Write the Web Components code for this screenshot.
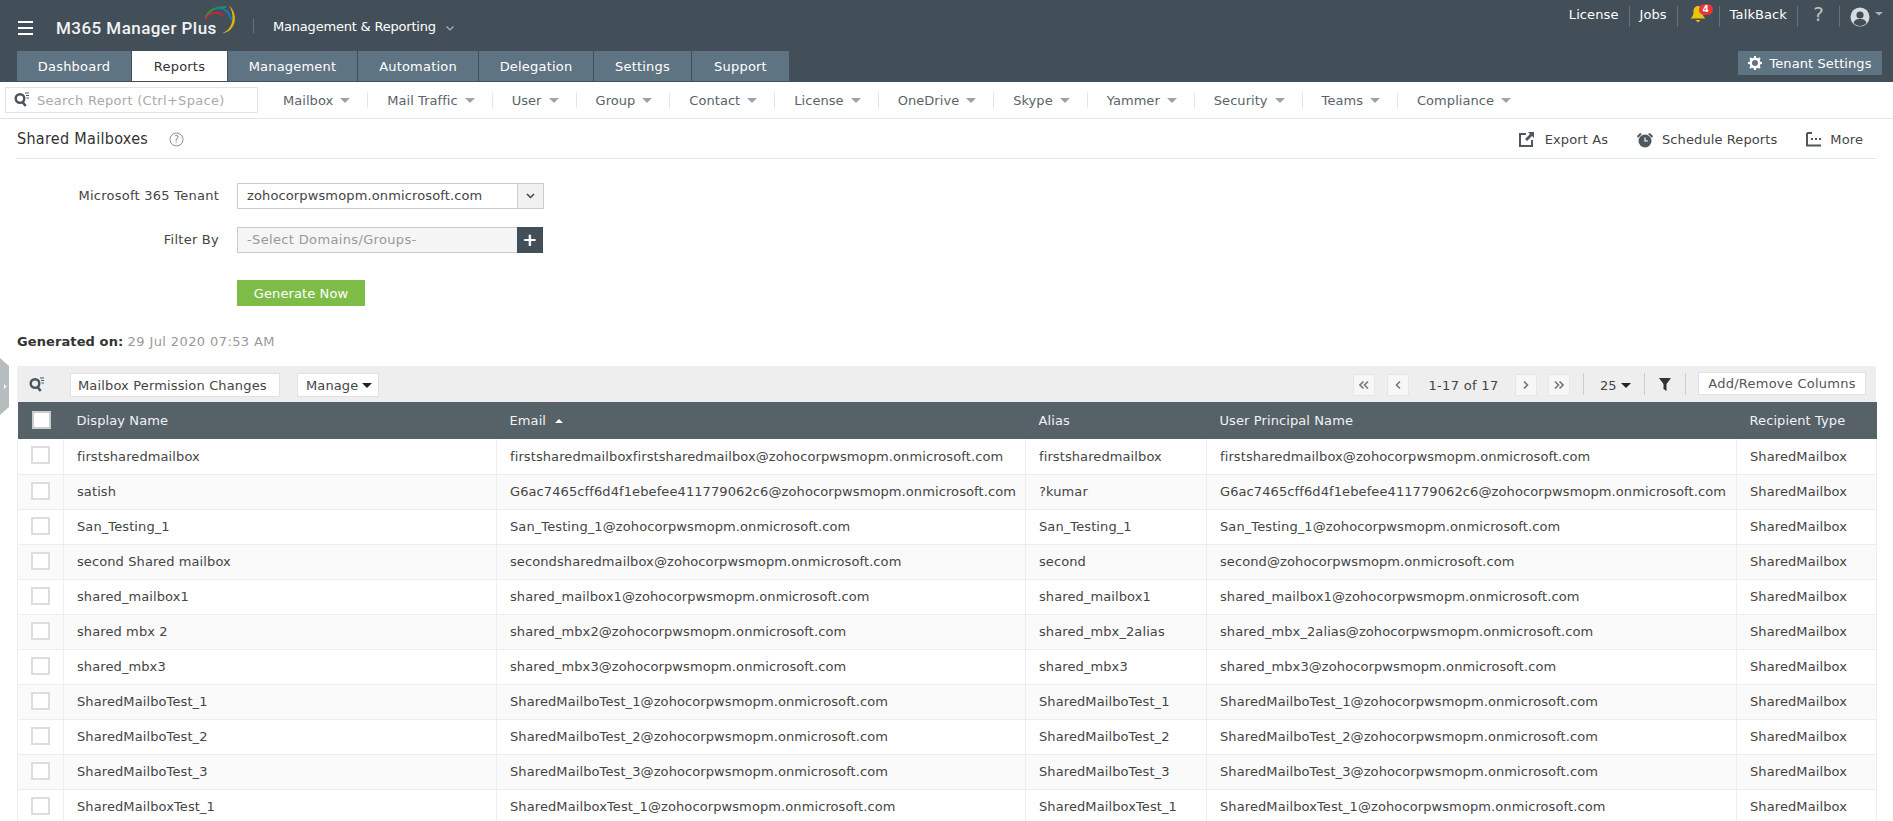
<!DOCTYPE html>
<html>
<head>
<meta charset="utf-8">
<title>Shared Mailboxes</title>
<style>
  html, body { margin: 0; height: 821px; overflow: hidden; background: #fff; }
  body { font-family: "DejaVu Sans", sans-serif; font-size: 13px; letter-spacing: .1px; color: #444; position: relative; }
</style>
</head>
<body>
<m365-header>
  <m365-tab slot="tabs" w="114">Dashboard</m365-tab>
  <m365-tab slot="tabs" w="95" active>Reports</m365-tab>
  <m365-tab slot="tabs" w="129">Management</m365-tab>
  <m365-tab slot="tabs" w="120">Automation</m365-tab>
  <m365-tab slot="tabs" w="114">Delegation</m365-tab>
  <m365-tab slot="tabs" w="97">Settings</m365-tab>
  <m365-tab slot="tabs" w="97">Support</m365-tab>
</m365-header>
<m365-nav>
  <m365-nav-item>Mailbox</m365-nav-item>
  <m365-nav-item>Mail Traffic</m365-nav-item>
  <m365-nav-item>User</m365-nav-item>
  <m365-nav-item>Group</m365-nav-item>
  <m365-nav-item>Contact</m365-nav-item>
  <m365-nav-item>License</m365-nav-item>
  <m365-nav-item>OneDrive</m365-nav-item>
  <m365-nav-item>Skype</m365-nav-item>
  <m365-nav-item>Yammer</m365-nav-item>
  <m365-nav-item>Security</m365-nav-item>
  <m365-nav-item>Teams</m365-nav-item>
  <m365-nav-item last>Compliance</m365-nav-item>
</m365-nav>
<m365-titlebar>Shared Mailboxes</m365-titlebar>
<m365-form></m365-form>
<m365-toolbar></m365-toolbar>
<m365-grid></m365-grid>
<m365-handle></m365-handle>

<script>
  const SEARCH_ICON = `<svg width="16" height="15" viewBox="0 0 16 15"><circle cx="6" cy="6.500" r="4.300" fill="none" stroke="#4a555c" stroke-width="2.400"/><path d="M8.500 10l3.200 4" stroke="#4a555c" stroke-width="2.600"/><path d="M11 1h4M12 3.500h3M12.500 6h2.500" stroke="#4a555c" stroke-width="1"/></svg>`;

  class M365Header extends HTMLElement {
    constructor() {
      super();
      this.attachShadow({mode: "open"}).innerHTML = `
      <style>
        :host { display: block; height: 82px; background: #434f58; color: #fff; position: relative; }
        .top { display: flex; height: 51px; align-items: flex-start; }
        .burger { width: 15px; height: 14px; margin: 21px 23px 0 18px; display: flex; flex-direction: column; justify-content: space-between; }
        .burger i { display: block; height: 2px; background: #fff; }
        .logo { position: relative; width: 197px; height: 51px; }
        .logo b { display: block; font: 500 17px/20px Roboto, sans-serif; letter-spacing: .45px; padding-top: 18px; color: #f2f3f3; white-space: nowrap; }
        .logo svg { position: absolute; left: 149px; top: 5px; }
        .sep { width: 1px; height: 14px; background: #66727a; margin: 19px 19px 0 0; }
        .module { font-size: 13px; line-height: 16px; letter-spacing: -.2px; margin-top: 19px; white-space: nowrap; }
        .module svg { margin-left: 10px; }
        .links { margin-left: auto; display: flex; align-items: flex-start; padding: 6px 9px 0 0; }
        .links a { box-sizing: border-box; display: flex; align-items: center; height: 21px; padding: 0 10px 5px; border-right: 1px solid #66727a; }
        .links a:last-child { border: 0; padding: 0 0 0 10px; }
        .bell { position: relative; width: 42px; padding-left: 12px !important; }
        .badge { position: absolute; left: 21px; top: -2px; width: 14px; height: 11px; border-radius: 6px; background: #e8343c; font: 700 9px/11px "DejaVu Sans", sans-serif; text-align: center; }
        .q { width: 42px; justify-content: center; font-size: 20px; color: #b9c0c4; padding-left: 0 !important; padding-right: 0 !important; }
        .tabs { display: flex; padding-left: 17px; height: 30px; }
        .tenant { position: absolute; right: 11px; top: 51px; width: 144px; height: 24px; background: #5f7482; display: flex; align-items: center; justify-content: center; gap: 7px; white-space: nowrap; }
      </style>
      <div class="top">
        <div class="burger"><i></i><i></i><i></i></div>
        <div class="logo"><b>M365 Manager Plus</b>
          <svg width="32" height="30" viewBox="0 0 32 30" fill="none">
            <path d="M.5 13C3 6 9 2 21 2" stroke="#2f8f46" stroke-width="2.200"/>
            <path d="M12 3.500C19 2 25 7 26 15" stroke="#1c77b8" stroke-width="2"/>
            <path d="M.5 15C3 8 13 5 18 11" stroke="#bd2a33" stroke-width="2"/>
            <path d="M24 .5C31 6 32 18 26 24 24 26.500 20 28 16.500 28.500 23 26 27 21 27.500 14 27.800 9 26.500 4 24 .5Z" fill="#e6b30e"/>
          </svg>
        </div>
        <div class="sep"></div>
        <div class="module">Management &amp; Reporting<svg width="8" height="5" viewBox="0 0 8 5"><path d="M.5.5L4 4 7.500.5" fill="none" stroke="#aab3b8" stroke-width="1.200"/></svg></div>
        <div class="links">
          <a>License</a><a>Jobs</a>
          <a class="bell"><svg width="16" height="18" viewBox="0 0 16 18"><path d="M8 1C5 1 3.500 3.500 3.500 6.500 3.500 10 2.500 12 .5 13.500h15C13.500 12 12.500 10 12.500 6.500 12.500 3.500 11 1 8 1Z" fill="#eac40d"/><path d="M5.500 15h5L8 17.500Z" fill="#eac40d"/></svg><span class="badge">4</span></a>
          <a>TalkBack</a><a class="q">?</a>
          <a><svg width="34" height="20" viewBox="0 0 34 20"><circle cx="10" cy="10" r="9.500" fill="#d9dcde"/><circle cx="10" cy="8" r="3.600" fill="#434f58"/><path d="M3.500 16C4.500 12.500 7 12 10 12s5.500.5 6.500 4C14.500 18 12 19 10 19s-4.500-1-6.500-3Z" fill="#434f58"/><path d="M25 5h8l-4 3.500Z" fill="#aab3b8"/></svg></a>
        </div>
      </div>
      <div class="tabs"><slot name="tabs"></slot></div>
      <div class="tenant"><svg width="14" height="14" viewBox="0 0 14 14"><circle cx="7" cy="7" r="4.300" fill="none" stroke="#fff" stroke-width="2.600"/><path d="M7 0v3M7 11v3M0 7h3M11 7h3M2 2l2 2M10 10l2 2M12 2l-2 2M4 10l-2 2" stroke="#fff" stroke-width="2"/></svg>Tenant Settings</div>`;
    }
  }

  class M365Tab extends HTMLElement {
    constructor() {
      super();
      this.attachShadow({mode: "open"}).innerHTML = `
      <style>
        :host { display: flex; align-items: center; justify-content: center; box-sizing: border-box; height: 30px; background: #5f7482; color: #fff; margin-right: 1px; letter-spacing: .2px; }
        :host([active]) { background: #fff; color: #333; }
      </style><slot></slot>`;
    }
    connectedCallback() { this.style.width = this.getAttribute("w") + "px"; }
  }

  class M365Nav extends HTMLElement {
    constructor() {
      super();
      this.attachShadow({mode: "open"}).innerHTML = `
      <style>
        :host { display: flex; align-items: center; box-sizing: border-box; height: 37px; border-bottom: 1px solid #e2e6e7; padding: 0 0 1px 5px; }
        .search { box-sizing: border-box; width: 253px; height: 26px; border: 1px solid #e3e3e3; display: flex; align-items: center; gap: 7px; padding: 0 0 0 8px; margin-right: 6px; color: #aaa; letter-spacing: .3px; }
        .search span { padding-top: 2px; }
      </style>
      <div class="search">${SEARCH_ICON}<span>Search Report (Ctrl+Space)</span></div><slot></slot>`;
    }
  }

  class M365NavItem extends HTMLElement {
    constructor() {
      super();
      this.attachShadow({mode: "open"}).innerHTML = `
      <style>
        :host { display: flex; align-items: center; gap: 7px; height: 15px; padding: 0 17px 0 19px; margin-top: 1px; border-right: 1px solid #e2e6e7; color: #59636a; white-space: nowrap; letter-spacing: .05px; }
        :host([last]) { border-right: 0; }
        i { width: 0; height: 0; border: 5px solid transparent; border-top-color: #9aa3a8; border-bottom: 0; }
      </style><slot></slot><i></i>`;
    }
  }

  class M365TitleBar extends HTMLElement {
    constructor() {
      super();
      this.attachShadow({mode: "open"}).innerHTML = `
      <style>
        :host { display: flex; align-items: center; box-sizing: border-box; height: 40px; margin: 0 17px; border-bottom: 1px solid #e2e6e7; color: #333; }
        h1 { margin: 0; font: 400 16px "DejaVu Sans Condensed", "DejaVu Sans", sans-serif; letter-spacing: .3px; width: 152px; }
        .help { margin-top: 2px; }
        .acts { margin-left: auto; display: flex; align-items: center; color: #444; padding: 2px 13px 0 0; }
        .acts span { display: flex; align-items: center; gap: 9px; margin-left: 29px; white-space: nowrap; }
      </style>
      <h1><slot></slot></h1>
      <svg class="help" width="15" height="15" viewBox="0 0 15 15"><circle cx="7.500" cy="7.500" r="6.500" fill="none" stroke="#8b9296"/><text x="7.500" y="11" font-size="10" text-anchor="middle" fill="#8b9296" font-family="DejaVu Sans">?</text></svg>
      <div class="acts">
        <span style="gap:11px"><svg width="15" height="15" viewBox="0 0 15 15"><path d="M7 2H1v12h12V8" fill="none" stroke="#4d595f" stroke-width="2"/><path d="M9 0h6v6L13 4 8 9 6 7l5-5Z" fill="#4d595f"/></svg>Export As</span>
        <span><svg width="16" height="16" viewBox="0 0 16 16"><circle cx="8" cy="9" r="6.500" fill="#4d595f"/><path d="M8 5.500V9h3" fill="none" stroke="#fff" stroke-width="1.200"/><path d="M0 4l3-3 2 1-4 4ZM16 4l-3-3-2 1 4 4Z" fill="#4d595f"/></svg>Schedule Reports</span>
        <span><svg width="15" height="15" viewBox="0 0 15 15"><path d="M1 1v12.500h14" fill="none" stroke="#4d595f" stroke-width="2"/><path d="M1 1h5" stroke="#4d595f" stroke-width="2"/><path d="M5 7h2M9 7h2M13 7h2" stroke="#4d595f" stroke-width="2"/></svg>More</span>
      </div>`;
    }
  }

  class M365Form extends HTMLElement {
    constructor() {
      super();
      this.attachShadow({mode: "open"}).innerHTML = `
      <style>
        :host { display: block; padding: 24px 17px 0; }
        .grid { display: grid; grid-template-columns: 202px 307px; column-gap: 18px; row-gap: 18px; align-items: center; }
        label { text-align: right; letter-spacing: .25px; margin-bottom: 2px; }
        .sel, .flt { box-sizing: border-box; height: 26px; display: flex; align-items: stretch; border: 1px solid #ccc; }
        .sel div:first-child, .flt div:first-child { flex: 1; padding-left: 9px; line-height: 23px; }
        .sel div:first-child { letter-spacing: .13px; }
        .sel .arr { width: 25px; background: #f1f1f1; border-left: 1px solid #ccc; display: flex; align-items: center; justify-content: center; }
        .flt { width: 306px; background: #f5f5f5; color: #999; letter-spacing: .35px; }
        .flt .plus { width: 26px; margin: -1px -1px -1px 0; background: #434f58; color: #fff; font: 700 18px/26px "DejaVu Sans", sans-serif; text-align: center; }
        .gen { grid-column: 2; justify-self: start; margin-top: 9px; width: 128px; height: 26px; background: #7ebc48; color: #fff; line-height: 27px; text-align: center; }
        .on { margin-top: 23px; height: 25px; line-height: 25px; color: #999; }
        .on b { color: #333; }
        .on span { letter-spacing: .4px; }
      </style>
      <div class="grid">
        <label>Microsoft 365 Tenant</label>
        <div class="sel"><div>zohocorpwsmopm.onmicrosoft.com</div><div class="arr"><svg width="9" height="6" viewBox="0 0 9 6"><path d="M1 1l3.500 3.500L8 1" fill="none" stroke="#444" stroke-width="1.500"/></svg></div></div>
        <label>Filter By</label>
        <div class="flt"><div>-Select Domains/Groups-</div><div class="plus">+</div></div>
        <div class="gen">Generate Now</div>
      </div>
      <div class="on"><b>Generated on:</b> <span>29 Jul 2020 07:53 AM</span></div>`;
    }
  }

  class M365Toolbar extends HTMLElement {
    constructor() {
      super();
      this.attachShadow({mode: "open"}).innerHTML = `
      <style>
        :host { display: flex; align-items: center; box-sizing: border-box; height: 36px; margin: 12px 17px 0; background: #eee; padding-left: 12px; }
        .box { box-sizing: border-box; height: 24px; background: #fff; border: 1px solid #e2e2e2; display: flex; align-items: center; white-space: nowrap; }
        .view { width: 210px; padding-left: 7px; margin: 2px 0 0 25px; letter-spacing: .15px; }
        .mg { width: 82px; padding-left: 8px; gap: 4px; margin: 2px 0 0 17px; }
        i.c { width: 0; height: 0; border: 5px solid transparent; border-top: 5px solid #222; border-bottom: 0; display: inline-block; }
        .right { margin-left: auto; display: flex; align-items: center; padding-right: 10px; }
        .pg { box-sizing: border-box; width: 22px; height: 22px; background: #f7f7f7; border: 1px solid #e6e6e6; color: #777; display: flex; align-items: center; justify-content: center; margin-top: 2px; }
        .s { width: 1px; height: 22px; background: #ccc; }
        .count { width: 106px; padding-left: 3px; box-sizing: border-box; text-align: center; letter-spacing: .33px; margin-top: 2px; }
        .add { width: 168px; height: 23px; justify-content: center; margin-left: 12px; color: #555; letter-spacing: .25px; margin-top: -1px; }
      </style>
      ${SEARCH_ICON}
      <div class="box view">Mailbox Permission Changes</div>
      <div class="box mg">Manage<i class="c"></i></div>
      <div class="right">
        <div class="pg"><svg width="10" height="8" viewBox="0 0 10 8"><path d="M4.500.5L1 4l3.500 3.500M9 .5L5.500 4 9 7.500" fill="none" stroke="#777" stroke-width="1.600"/></svg></div>
        <div class="pg" style="margin-left:12px"><svg width="6" height="8" viewBox="0 0 6 8"><path d="M5 .5L1.500 4 5 7.500" fill="none" stroke="#777" stroke-width="1.600"/></svg></div>
        <div class="count">1-17 of 17</div>
        <div class="pg"><svg width="6" height="8" viewBox="0 0 6 8"><path d="M1 .5L4.500 4 1 7.500" fill="none" stroke="#777" stroke-width="1.600"/></svg></div>
        <div class="pg" style="margin-left:11px"><svg width="10" height="8" viewBox="0 0 10 8"><path d="M1 .5L4.500 4 1 7.500M5.500.5L9 4 5.500 7.500" fill="none" stroke="#777" stroke-width="1.600"/></svg></div>
        <div class="s" style="margin-left:13px"></div>
        <div style="margin:2px 0 0 16px;display:flex;align-items:center;gap:4px;width:44px">25<i class="c"></i></div>
        <div class="s"></div>
        <svg style="margin:0 14px" width="12" height="13" viewBox="0 0 12 13"><path d="M0 0h12L7.500 6v7l-3-2V6Z" fill="#333"/></svg>
        <div class="s"></div>
        <div class="box add">Add/Remove Columns</div>
      </div>`;
    }
  }

  const ROWS = [
    ["firstsharedmailbox","firstsharedmailboxfirstsharedmailbox@zohocorpwsmopm.onmicrosoft.com","firstsharedmailbox","firstsharedmailbox@zohocorpwsmopm.onmicrosoft.com"],
    ["satish","G6ac7465cff6d4f1ebefee411779062c6@zohocorpwsmopm.onmicrosoft.com","?kumar","G6ac7465cff6d4f1ebefee411779062c6@zohocorpwsmopm.onmicrosoft.com"],
    ["San_Testing_1","San_Testing_1@zohocorpwsmopm.onmicrosoft.com","San_Testing_1","San_Testing_1@zohocorpwsmopm.onmicrosoft.com"],
    ["second Shared mailbox","secondsharedmailbox@zohocorpwsmopm.onmicrosoft.com","second","second@zohocorpwsmopm.onmicrosoft.com"],
    ["shared_mailbox1","shared_mailbox1@zohocorpwsmopm.onmicrosoft.com","shared_mailbox1","shared_mailbox1@zohocorpwsmopm.onmicrosoft.com"],
    ["shared mbx 2","shared_mbx2@zohocorpwsmopm.onmicrosoft.com","shared_mbx_2alias","shared_mbx_2alias@zohocorpwsmopm.onmicrosoft.com"],
    ["shared_mbx3","shared_mbx3@zohocorpwsmopm.onmicrosoft.com","shared_mbx3","shared_mbx3@zohocorpwsmopm.onmicrosoft.com"],
    ["SharedMailboTest_1","SharedMailboTest_1@zohocorpwsmopm.onmicrosoft.com","SharedMailboTest_1","SharedMailboTest_1@zohocorpwsmopm.onmicrosoft.com"],
    ["SharedMailboTest_2","SharedMailboTest_2@zohocorpwsmopm.onmicrosoft.com","SharedMailboTest_2","SharedMailboTest_2@zohocorpwsmopm.onmicrosoft.com"],
    ["SharedMailboTest_3","SharedMailboTest_3@zohocorpwsmopm.onmicrosoft.com","SharedMailboTest_3","SharedMailboTest_3@zohocorpwsmopm.onmicrosoft.com"],
    ["SharedMailboxTest_1","SharedMailboxTest_1@zohocorpwsmopm.onmicrosoft.com","SharedMailboxTest_1","SharedMailboxTest_1@zohocorpwsmopm.onmicrosoft.com"]
  ];

  class M365Grid extends HTMLElement {
    constructor() {
      super();
      const body = ROWS.map(r => `<tr><td class="ck"><i></i></td>${r.map(c => `<td>${c}</td>`).join("")}<td>SharedMailbox</td></tr>`).join("");
      this.attachShadow({mode: "open"}).innerHTML = `
      <style>
        :host { display: block; margin: 0 17px; }
        table { border-collapse: collapse; table-layout: fixed; width: 1859px; }
        th { height: 37px; padding: 0 13px; background: #566168; color: #f1f3f3; font-weight: 400; text-align: left; white-space: nowrap; }
        td { box-sizing: border-box; height: 35px; padding: 0 13px; border: 1px solid #eee; border-width: 0 1px 1px 0; white-space: nowrap; color: #444; }
        td:first-child { border-left: 1px solid #eee; }
        tr:nth-child(even) td { background: #fafafa; }
        .ck { padding: 0 0 0 14px; }
        td.ck { padding-left: 13px; }
        i { display: block; box-sizing: border-box; width: 19px; height: 18px; margin-bottom: 2px; background: #fff; border: 2px solid #ddd; }
        th i { border-color: #c9cdd0; }
        .up { display: inline-block; width: 0; height: 0; border: 4px solid transparent; border-bottom-color: #fff; border-top: 0; margin: 0 0 2px 9px; }
      </style>
      <table>
        <colgroup><col style="width:46px"><col style="width:433px"><col style="width:529px"><col style="width:181px"><col style="width:530px"><col style="width:140px"></colgroup>
        <thead><tr><th class="ck"><i></i></th><th>Display Name</th><th>Email<span class="up"></span></th><th>Alias</th><th>User Principal Name</th><th>Recipient Type</th></tr></thead>
        <tbody>${body}</tbody>
      </table>`;
    }
  }

  // the grey pull tab on the left edge sits over the page
  class M365Handle extends HTMLElement {
    constructor() {
      super();
      this.attachShadow({mode: "open"}).innerHTML = `
      <style>:host { position: absolute; left: 0; top: 358px; width: 9px; height: 57px; }</style>
      <svg width="9" height="57" viewBox="0 0 9 57"><path d="M0 0L9 8V49L0 57Z" fill="#b6bdbf"/><path d="M4 26l2.500 2.500L4 31Z" fill="#fff"/></svg>`;
    }
  }

  customElements.define("m365-header", M365Header);
  customElements.define("m365-tab", M365Tab);
  customElements.define("m365-nav", M365Nav);
  customElements.define("m365-nav-item", M365NavItem);
  customElements.define("m365-titlebar", M365TitleBar);
  customElements.define("m365-form", M365Form);
  customElements.define("m365-toolbar", M365Toolbar);
  customElements.define("m365-grid", M365Grid);
  customElements.define("m365-handle", M365Handle);
</script>
</body>
</html>
